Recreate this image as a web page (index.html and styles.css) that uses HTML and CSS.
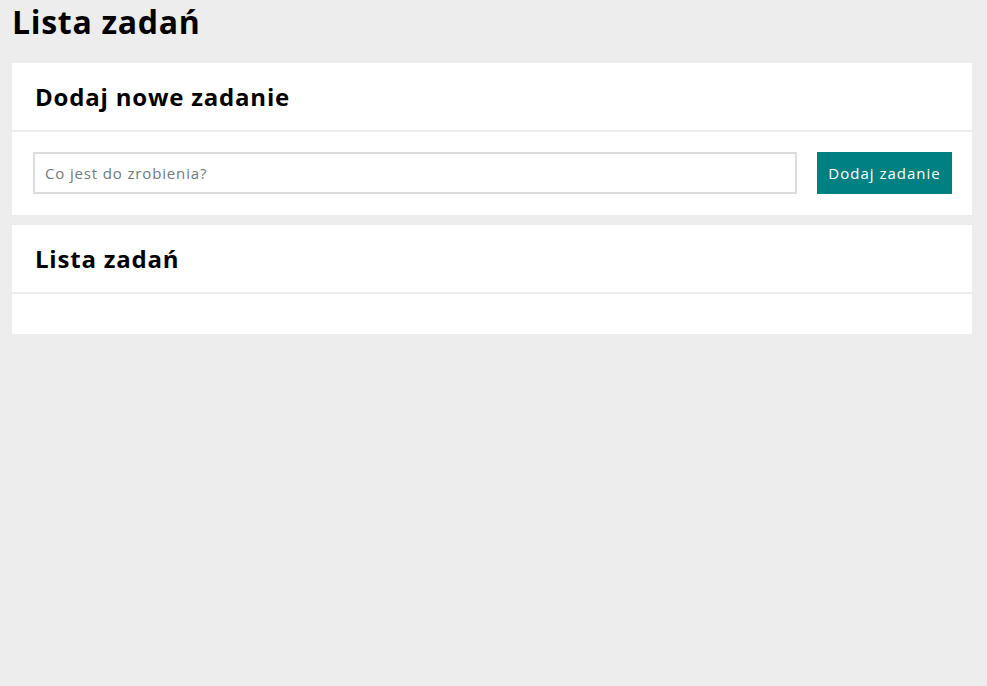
FILE: index.html
```html
<!DOCTYPE html>
<html lang="pl">
<head>
<meta charset="utf-8">
<title>Lista zadań</title>
<link rel="stylesheet" href="styles.css">
</head>
<body>
<div class="page">
  <h1 class="title">Lista zadań</h1>
  <section class="card">
    <header class="card-header"><h2 class="card-title">Dodaj nowe zadanie</h2></header>
    <div class="card-body form-row">
      <input class="task-input" type="text" placeholder="Co jest do zrobienia?">
      <button class="btn">Dodaj zadanie</button>
    </div>
  </section>
  <section class="card">
    <header class="card-header"><h2 class="card-title">Lista zadań</h2></header>
    <div class="card-body"></div>
  </section>
</div>
</body>
</html>
```
FILE: styles.css
```css
html, body {
  margin: 0;
  padding: 0;
  background: #ededed;
}
body {
  font-family: "Open Sans", "Liberation Sans", sans-serif;
  color: #000;
}
.page {
  width: 960px;
  margin: 0 12px;
  display: flex;
  flex-direction: column;
  gap: 10px;
}
.title {
  margin: 0 0 9px;
  font-size: 32px;
  font-weight: 700;
  line-height: 44px;
  letter-spacing: 0.7px;
  padding: 0;
}
.card {
  background: #fff;
}
.card-header {
  padding: 20px 23px;
  border-bottom: 2px solid #ededed;
}
.card-title {
  margin: 0;
  font-size: 24px;
  font-weight: 700;
  line-height: 27px;
  letter-spacing: 0.8px;
}
.card-body {
  padding: 20px;
}
.form-row {
  display: flex;
  gap: 20px;
  padding: 20px 20px 21px 21px;
}
.task-input {
  flex: 1;
  height: 42px;
  box-sizing: border-box;
  border: 2px solid #dcdcdc;
  padding: 0 10px;
  font-family: inherit;
  font-size: 15px;
  letter-spacing: 0.85px;
  color: #333;
  outline: none;
}
.task-input::placeholder {
  color: #6f7b7b;
}
.btn {
  width: 135px;
  height: 42px;
  border: 0;
  background: #008080;
  color: #fff;
  font-family: inherit;
  font-size: 15px;
  letter-spacing: 1px;
  padding: 0;
  cursor: pointer;
}
```
